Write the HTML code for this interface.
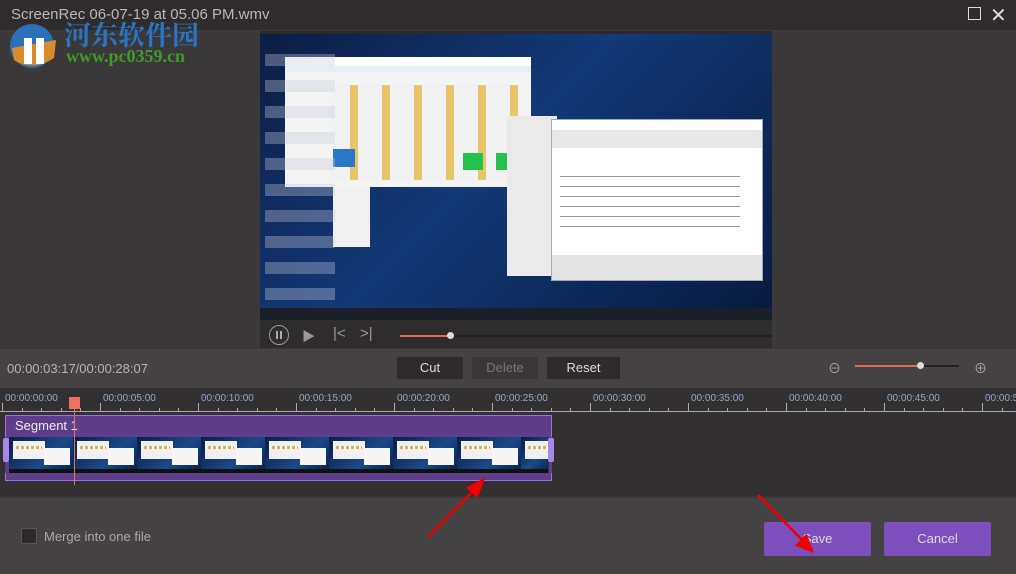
<!DOCTYPE html>
<html><head><meta charset="utf-8"><style>
*{margin:0;padding:0;box-sizing:border-box}
body{width:1016px;height:574px;background:#3b3839;position:relative;overflow:hidden;font-family:"Liberation Sans","Noto Sans CJK SC",sans-serif;color:#ddd}
.abs{position:absolute}
</style></head><body>
<div class="abs" style="left:0;top:0;width:1016px;height:30px;background:#2f2c2d"></div>
<div class="abs" style="left:11px;top:6px;font-size:15px;color:#b9b7b8">ScreenRec 06-07-19 at 05.06 PM.wmv</div>
<div class="abs" style="left:968px;top:7px;width:13px;height:13px;border:1.5px solid #ddd"></div>
<div class="abs" style="left:990px;top:3px;font-size:20px;color:#ddd">✕</div>
<!-- watermark -->
<svg class="abs" style="left:6px;top:22px" width="58" height="46"><circle cx="26" cy="24" r="22" fill="#2b6fb8"/><path d="M6 26 L50 18 L48 36 Q26 50 8 38Z" fill="#d98a2b"/><rect x="18" y="16" width="8" height="26" fill="#fff"/><rect x="30" y="16" width="8" height="26" fill="#fff"/></svg>
<div class="abs" style="left:64px;top:14px;font-size:27px;font-weight:bold;color:#2a74c4;font-family:'Liberation Serif','Noto Serif CJK SC',serif">河东软件园</div>
<div class="abs" style="left:66px;top:46px;font-size:18px;font-weight:bold;color:#3f9a2a;font-family:'Liberation Serif',serif">www.pc0359.cn</div>
<!-- video -->
<div class="abs" style="left:260px;top:31px;width:512px;height:289px;background:linear-gradient(135deg,#0b1d45 0%,#123a78 45%,#0d2a5c 70%,#081a40 100%)"></div>
<div class="abs" style="left:260px;top:31px;width:512px;height:3px;background:#2a2a2a"></div>
<div class="abs" style="left:285px;top:57px;width:246px;height:130px;background:#f4f4f4"></div>
<div class="abs" style="left:285px;top:57px;width:246px;height:12px;background:#fff"></div>
<div class="abs" style="left:285px;top:66px;width:246px;height:6px;background:#e6eef7"></div>
<div class="abs" style="left:330px;top:85px;width:190px;height:95px;background:repeating-linear-gradient(90deg,#f2f2f2 0 20px,#e8c56a 20px 28px,#f2f2f2 28px 32px)"></div>
<div class="abs" style="left:333px;top:149px;width:22px;height:18px;background:#2b77c7"></div>
<div class="abs" style="left:463px;top:153px;width:20px;height:17px;background:#25c24b"></div>
<div class="abs" style="left:496px;top:153px;width:20px;height:17px;background:#25c24b"></div>
<div class="abs" style="left:333px;top:187px;width:37px;height:60px;background:#f0f0f0"></div>
<div class="abs" style="left:507px;top:116px;width:50px;height:160px;background:#eaeaea"></div>
<div class="abs" style="left:551px;top:119px;width:212px;height:162px;background:#fff;border:1px solid #9ab"></div>
<div class="abs" style="left:552px;top:130px;width:210px;height:18px;background:#e8e8e8"></div>
<div class="abs" style="left:552px;top:255px;width:210px;height:25px;background:#e4e4e4"></div>
<div class="abs" style="left:560px;top:170px;width:180px;height:60px;background:repeating-linear-gradient(180deg,transparent 0 6px,#999 6px 7px,transparent 7px 10px)"></div>
<div class="abs" style="left:265px;top:40px;width:70px;height:260px;background:repeating-linear-gradient(180deg,transparent 0 14px,rgba(200,200,220,.35) 14px 26px)"></div>
<div class="abs" style="left:260px;top:308px;width:512px;height:12px;background:#1b1f2a"></div>
<!-- controls -->
<div class="abs" style="left:260px;top:320px;width:512px;height:28px;background:#2f2c2d"></div>
<div class="abs" style="left:269px;top:325px;width:20px;height:20px;border:1.5px solid #999;border-radius:50%"></div>
<div class="abs" style="left:276px;top:331px;width:2px;height:8px;background:#aaa"></div>
<div class="abs" style="left:280px;top:331px;width:2px;height:8px;background:#aaa"></div>
<div class="abs" style="left:302px;top:326px;color:#999;font-size:13px">▶</div>
<div class="abs" style="left:333px;top:325px;color:#999;font-size:15px">|&lt;</div>
<div class="abs" style="left:360px;top:325px;color:#999;font-size:15px">&gt;|</div>
<div class="abs" style="left:400px;top:335px;width:50px;height:2px;background:#e86a5a"></div>
<div class="abs" style="left:450px;top:335px;width:322px;height:2px;background:#222"></div>
<div class="abs" style="left:447px;top:332px;width:7px;height:7px;border-radius:50%;background:#ddd"></div>
<!-- toolbar -->
<div class="abs" style="left:0;top:349px;width:1016px;height:39px;background:#454243"></div>
<div class="abs" style="left:7px;top:361px;font-size:13px;color:#b5b3b4">00:00:03:17/00:00:28:07</div>
<div class="abs" style="left:397px;top:357px;width:66px;height:22px;background:#2e2b2c;border-radius:2px;text-align:center;line-height:22px;font-size:13px;color:#ddd">Cut</div>
<div class="abs" style="left:472px;top:357px;width:66px;height:22px;background:#3a3738;text-align:center;line-height:22px;font-size:13px;color:#777">Delete</div>
<div class="abs" style="left:547px;top:357px;width:73px;height:22px;background:#2e2b2c;text-align:center;line-height:22px;font-size:13px;color:#ddd">Reset</div>
<div class="abs" style="left:828px;top:358px;font-size:13px;color:#aaa">⊖</div>
<div class="abs" style="left:855px;top:365px;width:65px;height:2px;background:#e86a5a"></div>
<div class="abs" style="left:920px;top:365px;width:39px;height:2px;background:#222"></div>
<div class="abs" style="left:917px;top:362px;width:7px;height:7px;border-radius:50%;background:#ddd"></div>
<div class="abs" style="left:974px;top:358px;font-size:13px;color:#aaa">⊕</div>
<!-- timeline -->
<div class="abs" style="left:0;top:388px;width:1016px;height:108px;background:#333031"></div>
<div class="abs" style="left:0;top:411px;width:1016px;height:1px;background:#aaa"></div>
<div id="rl"></div>
<script>
var h='';for(var i=0;i<11;i++){var x=5+i*98;var m=String(i*5).padStart(2,'0');h+='<div class="abs" style="left:'+(x)+'px;top:393px;font-size:10px;color:#8fa8c8">00:00:'+m+':00</div><div class="abs" style="left:'+(x-3)+'px;top:403px;width:1px;height:8px;background:#aaa"></div>';for(var j=1;j<5;j++)h+='<div class="abs" style="left:'+(x-3+j*19.6)+'px;top:408px;width:1px;height:3px;background:#aaa"></div>';}
for(var k=0;k<9;k++){var tx=9+k*64;h+='<div class="abs" style="left:'+tx+'px;top:437px;width:'+(k==8?27:64)+'px;height:36px;background:linear-gradient(135deg,#0b1d45,#1a4a8a 60%,#0b1d45);overflow:hidden"><div class="abs" style="left:4px;top:4px;width:32px;height:18px;background:#f0f0f0"></div><div class="abs" style="left:7px;top:9px;width:26px;height:3px;background:repeating-linear-gradient(90deg,#e0b050 0 3px,#fff 3px 5px)"></div><div class="abs" style="left:35px;top:11px;width:26px;height:17px;background:#f5f5f5"></div><div class="abs" style="left:0;top:32px;width:64px;height:4px;background:#111"></div></div>';}
document.getElementById('rl').outerHTML=h;
</script>
<div class="abs" style="left:5px;top:415px;width:547px;height:66px;border:1px solid #9d70e8;background:linear-gradient(#5e3d8a 0 21px,transparent 21px 57px,#5e3d8a 57px)"></div>
<div class="abs" style="left:5px;top:437px;width:4px;height:36px;background:#5e3d8a"></div>
<div class="abs" style="left:549px;top:437px;width:3px;height:36px;background:#5e3d8a"></div>
<div class="abs" style="left:15px;top:418px;font-size:13px;color:#eee">Segment 1</div>
<div class="abs" style="left:3px;top:438px;width:6px;height:24px;background:#a986ea;border-radius:2px"></div>
<div class="abs" style="left:548px;top:438px;width:6px;height:24px;background:#a986ea;border-radius:2px"></div>
<div class="abs" style="left:74px;top:405px;width:1px;height:80px;background:#e8705d"></div>
<div class="abs" style="left:69px;top:397px;width:11px;height:12px;background:#ee7060"></div>
<!-- bottom -->
<div class="abs" style="left:0;top:498px;width:1016px;height:76px;background:#454243"></div>
<div class="abs" style="left:21px;top:528px;width:16px;height:16px;background:#2c2a2b;border:1px solid #555;border-radius:2px"></div>
<div class="abs" style="left:44px;top:529px;font-size:13px;color:#aaa">Merge into one file</div>
<div class="abs" style="left:764px;top:522px;width:107px;height:34px;background:#7c4fbd;border-radius:2px;text-align:center;line-height:34px;font-size:13px;color:#ddd">Save</div>
<div class="abs" style="left:884px;top:522px;width:107px;height:34px;background:#7c4fbd;border-radius:2px;text-align:center;line-height:34px;font-size:13px;color:#ddd">Cancel</div>
<svg class="abs" style="left:0;top:0" width="1016" height="574"><g stroke="#e00" stroke-width="2.5" fill="#e00"><line x1="428" y1="537" x2="478" y2="486"/><polygon points="483,480 468,488 477,496"/><line x1="758" y1="495" x2="808" y2="546"/><polygon points="812,551 797,545 806,536"/></g></svg>
</body></html>
